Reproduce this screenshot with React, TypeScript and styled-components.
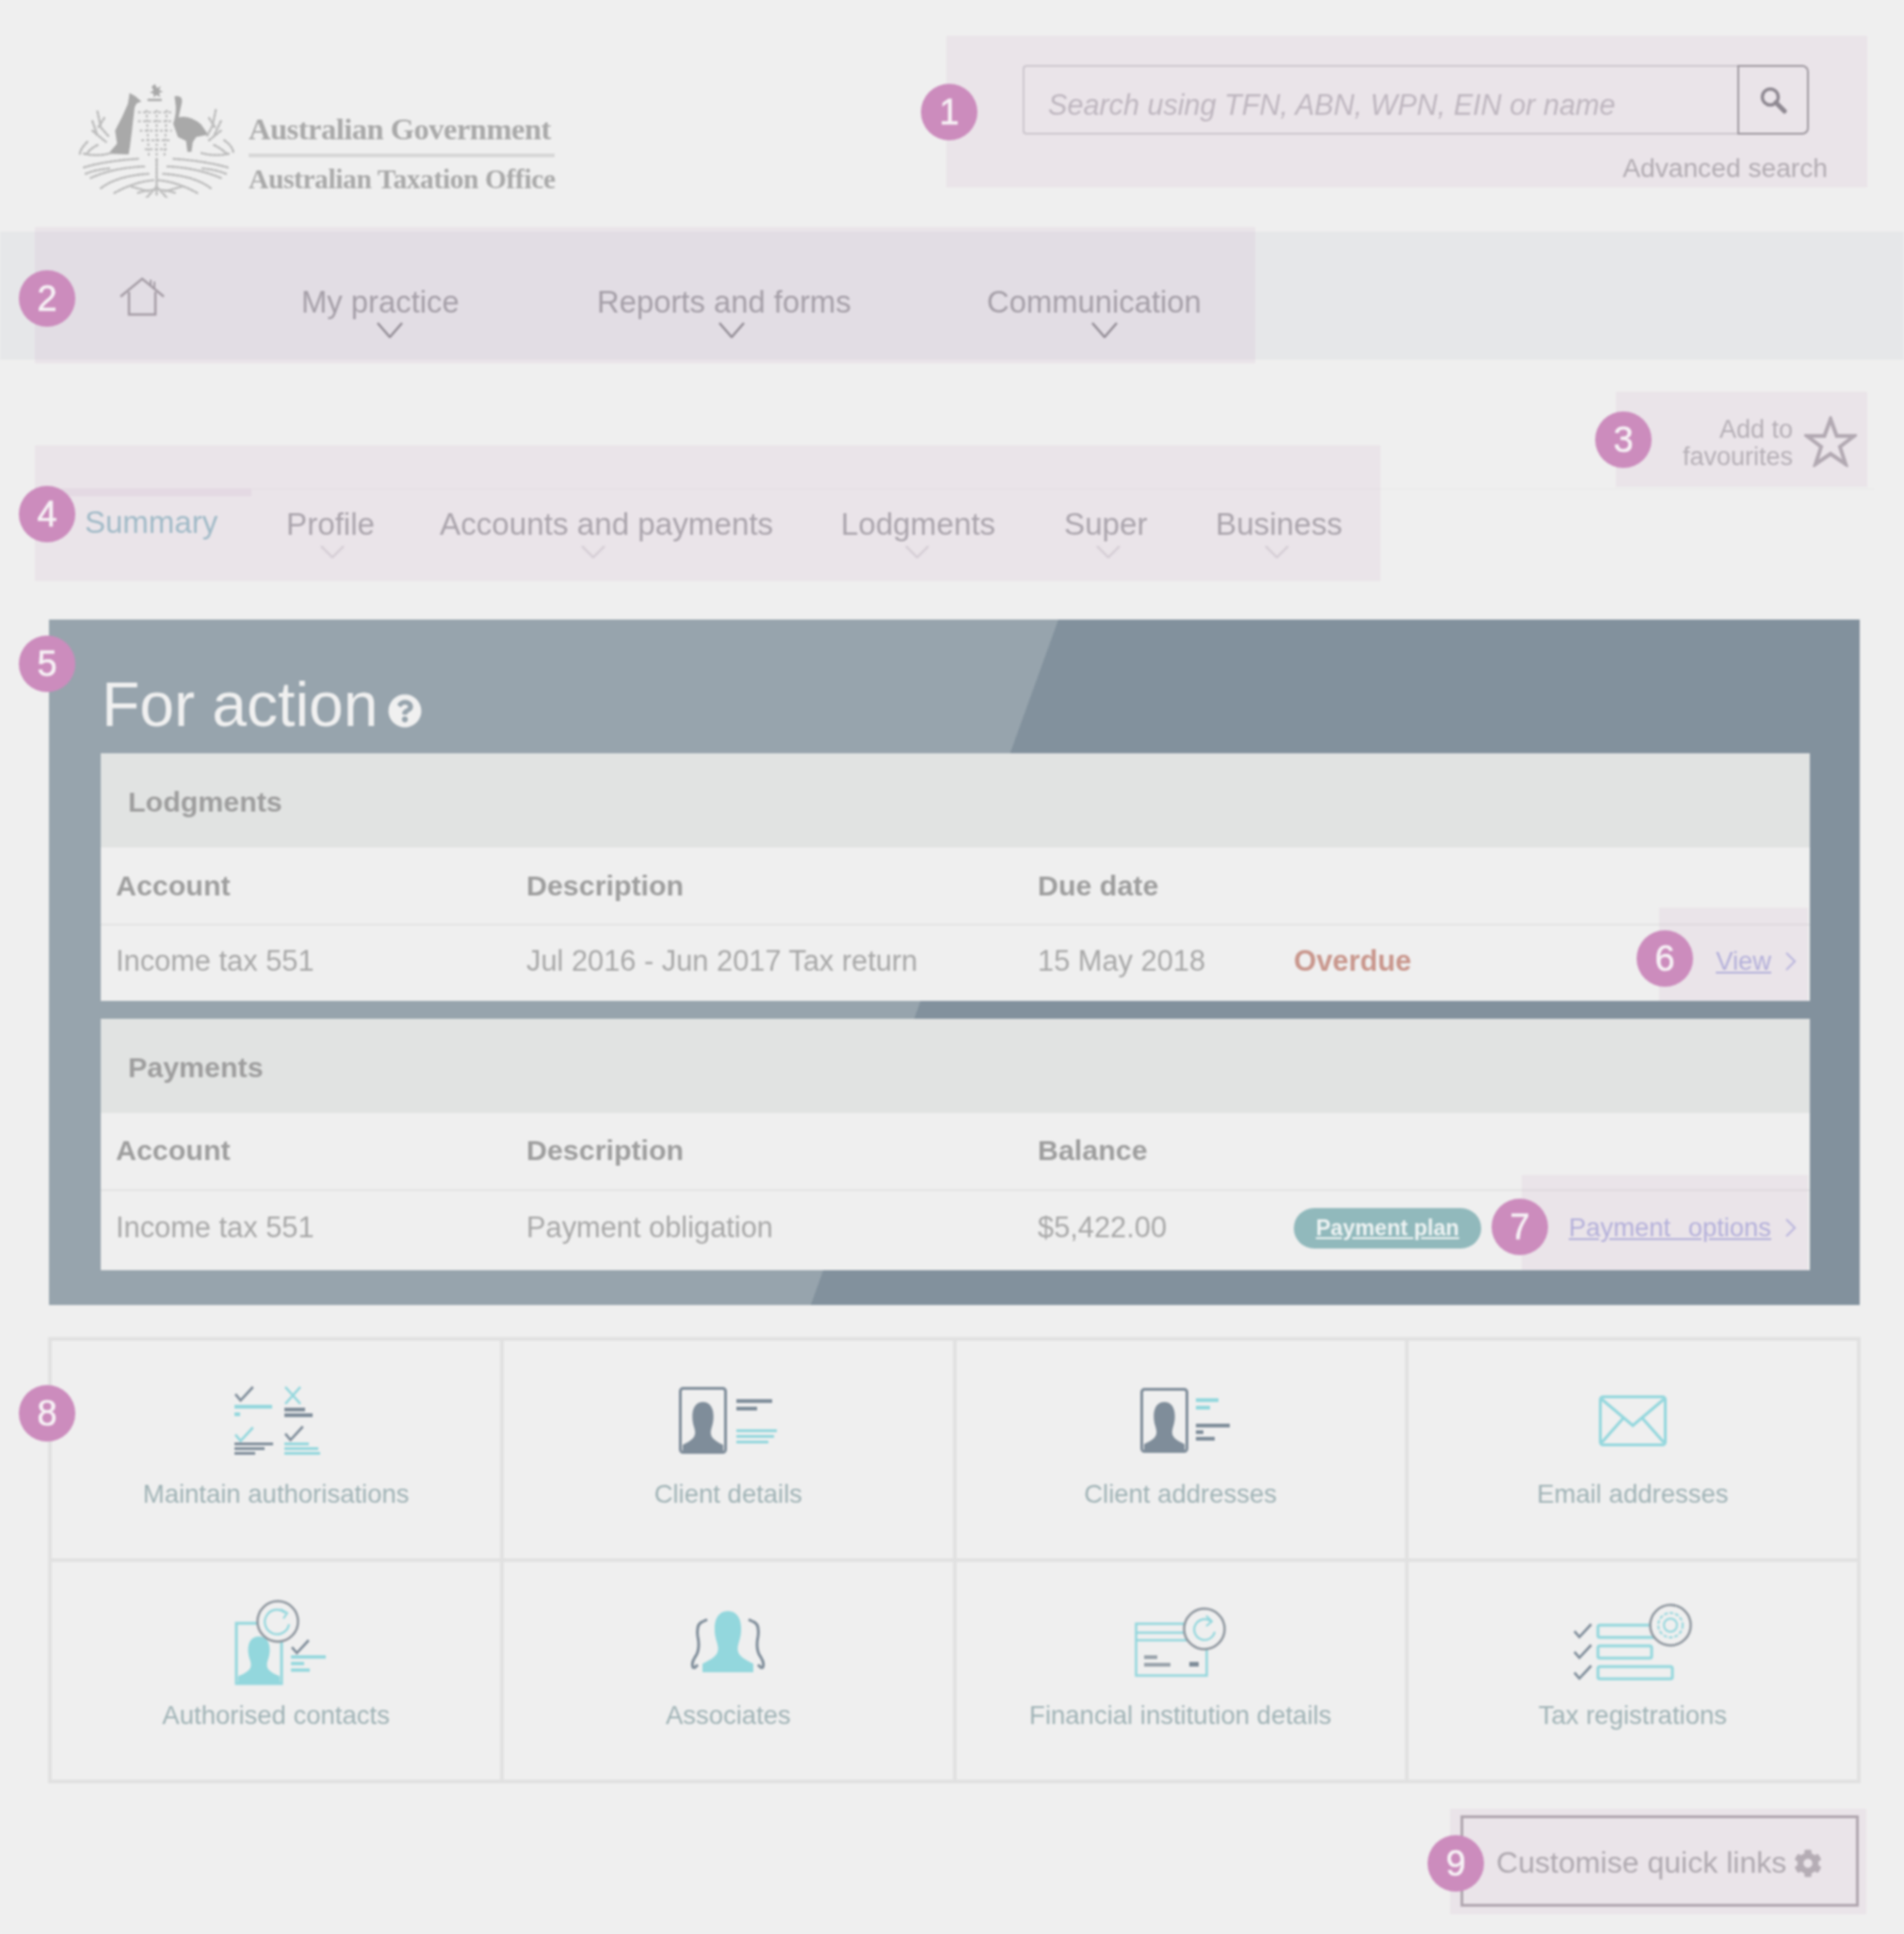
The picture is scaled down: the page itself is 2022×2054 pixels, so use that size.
import React from "react";
import styled, { createGlobalStyle } from "styled-components";
import { FaCog, FaQuestionCircle } from "react-icons/fa";

const GlobalStyle = createGlobalStyle`
  html, body { margin: 0; padding: 0; background: #efefef; }
  * { box-sizing: border-box; }
`;

const Page = styled.div`
  position: relative;
  width: 2022px;
  height: 2054px;
  overflow: hidden;
  background: #efefef;
  font-family: "Liberation Sans", Arial, sans-serif;
  color: #a3a3a5;
  filter: blur(1.05px);
`;

const Header = styled.header`
  height: 246px;
  display: flex;
  justify-content: space-between;
  padding: 0 101px 0 82px;
`;
const LogoBlock = styled.div`
  display: flex;
  align-items: flex-start;
  padding-top: 88px;
  gap: 14px;
`;
const LogoText = styled.div`
  display: flex;
  flex-direction: column;
  width: 325px;
  padding-top: 30px;
  font-family: "Liberation Serif", "Times New Roman", serif;
  font-weight: 700;
  color: #a9a9a9;
  white-space: nowrap;
`;
const LogoLine = styled.div`
  font-size: 32.5px;
  letter-spacing: -0.5px;
  line-height: 38px;
  height: 36px;
`;
const LogoRule = styled.div`
  height: 4px;
  background: #d7d7d7;
  margin: 9px 0 4px;
`;
const LogoSub = styled.div`
  font-size: 29.5px;
  letter-spacing: -0.4px;
  line-height: 38px;
`;
const SearchBlock = styled.div`
  width: 835px;
  padding-top: 69px;
`;
const SearchRow = styled.div`
  display: flex;
  height: 74px;
`;
const SearchField = styled.div`
  flex: 1;
  display: flex;
  align-items: center;
  padding: 10px 0 0 25px;
  border: 2px solid #cfcfd1;
  border-right: 0;
  border-radius: 4px 0 0 4px;
  font-size: 30.6px;
  font-style: italic;
  color: #bebcc0;
`;
const SearchButton = styled.div`
  width: 76px;
  display: flex;
  align-items: center;
  justify-content: center;
  border: 2px solid #9a9a9d;
  border-radius: 0 7px 7px 0;
`;
const AdvancedLink = styled.div`
  margin-top: 18px;
  margin-right: -20px;
  text-align: right;
  font-size: 28.2px;
  line-height: 34px;
  color: #b0b0b2;
`;

const Nav = styled.nav`
  height: 136px;
  background: #e6e7e9;
  display: flex;
  padding-left: 127px;
`;
const HomeLink = styled.div`
  width: 193px;
  padding-top: 48px;
`;
const NavItem = styled.div<{ $width: number }>`
  width: ${(p) => p.$width}px;
  padding-top: 54px;
  font-size: 32.8px;
  line-height: 42px;
  white-space: nowrap;
  color: #a2a2a6;
`;
const ChevronSlot = styled.div<{ $left: number; $top?: number }>`
  margin-left: ${(p) => p.$left}px;
  margin-top: ${(p) => p.$top ?? 0}px;
  line-height: 0;
`;

const FavRow = styled.div`
  height: 136px;
  display: flex;
  justify-content: flex-end;
  align-items: flex-start;
  padding: 60px 50px 0 0;
  gap: 12px;
`;
const FavText = styled.div`
  text-align: right;
  font-size: 27px;
  line-height: 29px;
  color: #b4b4b6;
`;

const Tabs = styled.div`
  height: 140px;
  margin: 0 32px 0 37px;
  border-top: 2px solid #ebebeb;
  display: flex;
`;
const TabActive = styled.div`
  width: 230px;
  margin-top: -1px;
  border-top: 8px solid #e8e3e8;
  padding: 7px 0 0 53px;
  font-size: 33px;
  line-height: 42px;
  color: #9dc0c9;
`;
const Tab = styled.div<{ $width: number }>`
  width: ${(p) => p.$width}px;
  padding-top: 16px;
  font-size: 33.2px;
  line-height: 42px;
  white-space: nowrap;
  color: #a8a8ab;
`;

const ActionPanel = styled.section`
  position: relative;
  height: 728px;
  margin: 0 47px 0 52px;
  padding: 142px 53px 0 55px;
  background: #82919d;
  overflow: hidden;
  &::before {
    content: "";
    position: absolute;
    inset: 0;
    background: #97a4ad;
    clip-path: polygon(0 0, 1072px 0, 809px 100%, 0 100%);
  }
`;
const ActionTitle = styled.h1`
  position: absolute;
  left: 56px;
  top: 47px;
  margin: 0;
  display: flex;
  align-items: center;
  gap: 11px;
  font-size: 66px;
  line-height: 86px;
  font-weight: 400;
  color: #f0f0f0;
`;
const HelpIcon = styled(FaQuestionCircle)`
  width: 36px;
  height: 36px;
  color: #f0f0f0;
  margin-top: 14px;
`;
const Card = styled.div<{ $height: number; $gap?: number }>`
  position: relative;
  height: ${(p) => p.$height}px;
  margin-bottom: ${(p) => p.$gap ?? 0}px;
  background: #efefef;
`;
const CardHead = styled.div`
  height: 100px;
  padding: 2px 29px 0;
  display: flex;
  align-items: center;
  background: #e1e3e2;
  font-size: 30.4px;
  font-weight: 700;
  color: #9e9e9e;
`;
const Row = styled.div<{ $height: number; $ruled?: boolean; $lift?: number }>`
  height: ${(p) => p.$height}px;
  display: grid;
  grid-template-columns: 436px 543px 272px 1fr;
  align-items: center;
  padding: 0 14px ${(p) => p.$lift ?? 0}px 16px;
  font-size: 30.8px;
  color: #a8a8a8;
  border-top: ${(p) => (p.$ruled ? "2px solid #e3e3e3" : "0")};
`;
const HeadCell = styled.div`
  font-size: 30.4px;
  font-weight: 700;
  color: #9e9e9e;
`;
const StatusCell = styled.div`
  display: flex;
  align-items: center;
  justify-content: space-between;
  white-space: nowrap;
`;
const Overdue = styled.span`
  font-weight: 700;
  color: #c9978d;
`;
const Pill = styled.span`
  width: 199px;
  height: 43px;
  border-radius: 22px;
  background: #91b9bc;
  color: #eef3f3;
  display: flex;
  align-items: center;
  justify-content: center;
  font-size: 23.4px;
  font-weight: 700;
  text-decoration: underline;
`;
const RowLink = styled.span`
  display: flex;
  align-items: center;
  gap: 14px;
  font-size: 27.4px;
  word-spacing: 11px;
  color: #b3b5de;
  text-decoration: underline;
`;

const QuickGrid = styled.div`
  width: 1925px;
  height: 474px;
  margin: 34px 0 0 51px;
  display: grid;
  grid-template-columns: repeat(4, 1fr);
  grid-template-rows: repeat(2, 1fr);
  gap: 4px;
  padding: 4px;
  background: #e1e1e1;
`;
const QuickCell = styled.div`
  background: #efefef;
  display: flex;
  flex-direction: column;
  align-items: center;
  padding-top: 30px;
`;
const IconArea = styled.div<{ $shift?: number }>`
  height: 110px;
  display: flex;
  align-items: center;
  justify-content: center;
  margin-left: ${(p) => p.$shift ?? 0}px;
`;
const QuickLabel = styled.div`
  margin-top: 7px;
  font-size: 27.5px;
  line-height: 32px;
  color: #a0b3b6;
  white-space: nowrap;
`;

const CustomiseRow = styled.div`
  display: flex;
  justify-content: flex-end;
  padding: 34px 48px 0 0;
`;
const CustomiseButton = styled.div`
  width: 423px;
  height: 97px;
  border: 3px solid #aeaaae;
  display: flex;
  align-items: center;
  padding: 4px 0 0 35px;
  gap: 8px;
  font-size: 32.1px;
  color: #adadaf;
  white-space: nowrap;
`;
const Gear = styled(FaCog)`
  width: 30px;
  height: 30px;
  color: #b4b1b5;
`;

const Highlight = styled.div<{ $x: number; $y: number; $w: number; $h: number }>`
  position: absolute;
  left: ${(p) => p.$x}px;
  top: ${(p) => p.$y}px;
  width: ${(p) => p.$w}px;
  height: ${(p) => p.$h}px;
  background: rgba(200, 140, 190, 0.1);
  pointer-events: none;
`;
const Badge = styled.div<{ $x: number; $y: number }>`
  position: absolute;
  left: ${(p) => p.$x - 30}px;
  top: ${(p) => p.$y - 30}px;
  width: 60px;
  height: 60px;
  border-radius: 50%;
  background: #cc8cbd;
  color: #f6f1f5;
  display: flex;
  align-items: center;
  justify-content: center;
  font-size: 38px;
  font-weight: 400;
  -webkit-text-stroke: 0.6px #f6f1f5;
`;

const DARK = "#7f8d9a";
const TEAL = "#93d7dd";

const Chevron = ({ w, h, color, sw }: { w: number; h: number; color: string; sw: number }) => (
  <svg width={w} height={h} viewBox={`0 0 ${w} ${h}`} fill="none">
    <path d={`M1 1 L${w / 2} ${h - 1} L${w - 1} 1`} stroke={color} strokeWidth={sw} />
  </svg>
);
const NavChevron = () => <Chevron w={28} h={17} color="#8f8f93" sw={2.5} />;
const TabChevron = () => <Chevron w={26} h={14} color="#d9d7da" sw={2.5} />;
const LinkChevron = () => (
  <svg width="13" height="22" viewBox="0 0 13 22" fill="none">
    <path d="M2 2 L11 11 L2 20" stroke="#bbbde2" strokeWidth="2.2" />
  </svg>
);

const Arms = () => (
  <svg width="168" height="122" viewBox="0 0 468 360" preserveAspectRatio="none" fill="none">
    <g fill="#a9a9a9">
      <path d="M155 32 L172 42 L190 58 L176 64 L170 76 L166 112 L162 150 L156 200 L152 224 L92 222 L118 190 L112 150 L134 104 L150 66 Z" />
      <path d="M288 42 Q312 38 310 60 L300 108 Q332 100 366 130 L388 162 L352 170 L342 186 L338 216 L326 216 L322 182 L298 170 L284 128 Q296 90 290 60 Z" />
      <path d="M230 4 L236 16 L248 10 L242 22 L254 28 L242 32 L246 44 L234 38 L226 46 L226 34 L214 30 L226 24 L220 12 Z" />
      <rect x="208" y="50" width="42" height="7" />
    </g>
    <g stroke="#b9b9b9" strokeWidth="6" strokeDasharray="8 7">
      <path d="M180 92 H285 M180 120 H285 M185 150 H280 M190 180 H275 M200 208 H265" />
      <path d="M205 85 L212 230 M235 85 V250 M265 85 L258 230" />
    </g>
    <g stroke="#bdbdbd" strokeWidth="7" strokeDasharray="7 6" strokeLinecap="round">
      <path d="M60 90 L70 140 L95 170 M45 120 L60 165 M80 110 L62 140 M45 150 L85 185 M30 185 Q10 205 8 222 M60 195 Q40 205 30 220 M20 222 Q60 232 100 220" />
      <path d="M410 85 L400 135 L385 165 M425 120 L405 165 M390 110 L408 140 M425 150 L390 180 M435 180 Q462 200 462 222 M405 195 Q425 205 440 220 M448 222 Q410 232 368 220" />
      <path d="M20 265 Q80 245 180 238 M25 285 Q60 270 100 268 M40 298 Q110 265 200 262 M70 330 Q120 290 215 285 M110 345 Q170 310 225 305" />
      <path d="M445 265 Q380 245 285 238 M440 285 Q405 270 365 268 M425 298 Q350 265 265 262 M395 330 Q345 290 250 285 M355 345 Q295 310 240 305" />
      <path d="M235 240 V350 M180 345 Q235 325 290 345 M205 360 L235 325 L265 360 M160 325 L210 340 M310 325 L260 340" />
    </g>
  </svg>
);

const HomeIcon = () => (
  <svg width="48" height="42" viewBox="0 0 48 42" fill="none" stroke="#a2a0a4" strokeWidth="2.5">
    <path d="M1 21 L24 2 L47 21" />
    <path d="M33 9 V3 M37 12 V5" strokeWidth="2" />
    <path d="M10 16 V40 H38 V16" />
  </svg>
);

const SearchGlyph = () => (
  <svg width="30" height="30" viewBox="0 0 30 30" fill="none" stroke="#8a8a8e">
    <circle cx="12" cy="12" r="8.5" strokeWidth="3.5" />
    <path d="M18 18 L27 27" strokeWidth="5" strokeLinecap="round" />
  </svg>
);

const StarIcon = () => (
  <svg width="56" height="54" viewBox="0 0 56 54" fill="none">
    <path d="M28 3 L34.5 21 L53 21 L38 32.5 L44 51 L28 40 L12 51 L18 32.5 L3 21 L21.5 21 Z" stroke="#b0adb1" strokeWidth="4" />
  </svg>
);

const Check = ({ x, y, color = DARK, s = 1 }: { x: number; y: number; color?: string; s?: number }) => (
  <path d={`M${x} ${y + 7 * s} L${x + 5 * s} ${y + 13 * s} L${x + 17 * s} ${y}`} stroke={color} strokeWidth={2.6} fill="none" />
);

const Bars = ({ x, y, widths, color, h = 3, step = 5 }: { x: number; y: number; widths: number[]; color: string; h?: number; step?: number }) => (
  <g fill={color}>
    {widths.map((w, i) => (
      <rect key={i} x={x} y={y + i * step} width={w} height={h} />
    ))}
  </g>
);

const Person = ({ x, y, w, h, color }: { x: number; y: number; w: number; h: number; color: string }) => (
  <path
    d={`M${x + w * 0.5} ${y} C${x + w * 0.78} ${y} ${x + w * 0.8} ${y + h * 0.3} ${x + w * 0.72} ${y + h * 0.5} C${x + w * 0.66} ${y + h * 0.66} ${x + w * 0.68} ${y + h * 0.74} ${x + w} ${y + h * 0.86} L${x + w} ${y + h} L${x} ${y + h} L${x} ${y + h * 0.86} C${x + w * 0.32} ${y + h * 0.74} ${x + w * 0.34} ${y + h * 0.66} ${x + w * 0.28} ${y + h * 0.5} C${x + w * 0.2} ${y + h * 0.3} ${x + w * 0.22} ${y} ${x + w * 0.5} ${y} Z`}
    fill={color}
  />
);

const MaintainIcon = () => (
  <svg width="92" height="76" viewBox="0 0 92 76">
    <Check x={1} y={2} s={1.1} />
    <Bars x={0} y={21} widths={[40, 6]} color={TEAL} h={4} step={8} />
    <path d="M54 2 L70 20 M70 2 L54 20" stroke={TEAL} strokeWidth="2.6" />
    <Bars x={53} y={24} widths={[22, 30]} color={DARK} h={4} step={6} />
    <Check x={1} y={45} color={TEAL} s={1.1} />
    <Bars x={0} y={61} widths={[41, 32, 22]} color={DARK} h={3} step={5} />
    <Check x={54} y={44} s={1.1} />
    <Bars x={53} y={61} widths={[26, 36, 38]} color={TEAL} h={3} step={5} />
  </svg>
);

const ClientDetailsIcon = () => (
  <svg width="104" height="72" viewBox="0 0 104 72">
    <rect x="1.5" y="1.5" width="48" height="68" rx="3" fill="none" stroke={DARK} strokeWidth="3" />
    <Person x={4} y={16} w={43} h={53} color={DARK} />
    <Bars x={61} y={13} widths={[38, 22]} color={DARK} h={4} step={8} />
    <Bars x={61} y={45} widths={[44, 40, 34]} color={TEAL} h={3} step={6} />
  </svg>
);

const ClientAddressesIcon = () => (
  <svg width="96" height="70" viewBox="0 0 96 70">
    <rect x="1.5" y="1.5" width="48" height="66" rx="3" fill="none" stroke={DARK} strokeWidth="3" />
    <Person x={4} y={15} w={43} h={52} color={DARK} />
    <Bars x={59} y={11} widths={[24, 15]} color={TEAL} h={4} step={8} />
    <Bars x={59} y={38} widths={[36, 8, 20]} color={DARK} h={4} step={7} />
  </svg>
);

const EmailIcon = () => (
  <svg width="72" height="54" viewBox="0 0 72 54" fill="none" stroke={TEAL} strokeWidth="3">
    <rect x="1.5" y="1.5" width="69" height="51" rx="3" />
    <path d="M3 4 L36 32 L69 4 M3 50 L26 24 M69 50 L46 24" />
  </svg>
);

const ContactsIcon = () => (
  <svg width="98" height="92" viewBox="0 0 98 92">
    <rect x="2" y="26" width="48" height="64" fill="none" stroke={TEAL} strokeWidth="3" />
    <Person x={4} y={40} w={44} h={49} color={TEAL} />
    <circle cx="46" cy="24" r="21.5" fill="#efefef" stroke="#8f979f" strokeWidth="2.5" />
    <path d="M54 15 A13 13 0 1 0 58 27" fill="none" stroke={TEAL} strokeWidth="2.2" />
    <path d="M49 11 L56 15 L52 21" fill="none" stroke={TEAL} strokeWidth="2" />
    <Check x={61} y={44} s={1.05} />
    <Bars x={60} y={60} widths={[37, 14, 20]} color={TEAL} h={3.5} step={7} />
  </svg>
);

const AssociatesIcon = () => (
  <svg width="80" height="68" viewBox="0 0 80 68" fill="none">
    <path d="M14 12 Q6 14 8 28 Q11 42 5 50 Q0 58 4 62 M66 12 Q74 14 72 28 Q69 42 75 50 Q80 58 76 62" stroke={DARK} strokeWidth="3" />
    <path d="M14 12 L18 10 M66 12 L62 10 M4 62 L8 58 M76 62 L72 58" stroke={DARK} strokeWidth="3" />
    <Person x={13} y={1} w={54} h={65} color={TEAL} />
  </svg>
);

const FinancialIcon = () => (
  <svg width="98" height="74" viewBox="0 0 98 74" fill="none">
    <rect x="1.5" y="17.5" width="75" height="55" stroke={TEAL} strokeWidth="2.5" />
    <path d="M2 27 H76 M2 35 H76" stroke={TEAL} strokeWidth="2.5" />
    <Bars x={10} y={51} widths={[14, 28]} color="#9aa3ab" h={4} step={8} />
    <rect x="58" y="58" width="10" height="5" fill={DARK} />
    <circle cx="74" cy="23" r="21.5" fill="#efefef" stroke="#8f979f" strokeWidth="2.5" />
    <path d="M81 15 A11 11 0 1 0 85 26" stroke={TEAL} strokeWidth="2.2" />
    <path d="M76 9 L82 15 L76 20" stroke={TEAL} strokeWidth="2" />
  </svg>
);

const TaxIcon = () => (
  <svg width="126" height="82" viewBox="0 0 126 82" fill="none">
    <Check x={1} y={22} s={1.05} />
    <Check x={1} y={44} s={1.05} />
    <Check x={1} y={66} s={1.05} />
    <rect x="26" y="23" width="62" height="13" rx="2" stroke={TEAL} strokeWidth="3" />
    <rect x="26" y="45" width="57" height="13" rx="2" stroke={TEAL} strokeWidth="3" />
    <rect x="26" y="67" width="79" height="13" rx="2" stroke={TEAL} strokeWidth="3" />
    <circle cx="103" cy="23" r="21.5" fill="#efefef" stroke="#8f979f" strokeWidth="2.5" />
    <circle cx="103" cy="23" r="13" stroke={TEAL} strokeWidth="2" strokeDasharray="4 2" />
    <circle cx="103" cy="23" r="7" stroke={TEAL} strokeWidth="2" />
  </svg>
);

const quickLinks: { label: string; icon: React.ReactNode; shift?: number }[] = [
  { label: "Maintain authorisations", icon: <MaintainIcon />, shift: 4 },
  { label: "Client details", icon: <ClientDetailsIcon /> },
  { label: "Client addresses", icon: <ClientAddressesIcon />, shift: 10 },
  { label: "Email addresses", icon: <EmailIcon /> },
  { label: "Authorised contacts", icon: <ContactsIcon />, shift: 9 },
  { label: "Associates", icon: <AssociatesIcon /> },
  { label: "Financial institution details", icon: <FinancialIcon /> },
  { label: "Tax registrations", icon: <TaxIcon /> },
];

const navItems = [
  { label: "My practice", width: 314, left: 80 },
  { label: "Reports and forms", width: 414, left: 129 },
  { label: "Communication", width: 232, left: 111 },
];
const tabs = [
  { label: "Profile", width: 163, left: 36 },
  { label: "Accounts and payments", width: 426, left: 150 },
  { label: "Lodgments", width: 237, left: 68 },
  { label: "Super", width: 161, left: 34 },
  { label: "Business", width: 150, left: 52 },
];
const highlights = [
  { x: 1005, y: 38, w: 978, h: 161 },
  { x: 37, y: 241, w: 1296, h: 145 },
  { x: 1716, y: 416, w: 267, h: 101 },
  { x: 37, y: 473, w: 1429, h: 144 },
  { x: 1762, y: 964, w: 158, h: 99 },
  { x: 1616, y: 1248, w: 304, h: 101 },
  { x: 1540, y: 1921, w: 442, h: 112 },
];
const badges = [
  { n: 1, x: 1008, y: 119 },
  { n: 2, x: 50, y: 317 },
  { n: 3, x: 1724, y: 467 },
  { n: 4, x: 50, y: 546 },
  { n: 5, x: 50, y: 705 },
  { n: 6, x: 1768, y: 1018 },
  { n: 7, x: 1614, y: 1303 },
  { n: 8, x: 50, y: 1501 },
  { n: 9, x: 1546, y: 1979 },
];

export default function App() {
  return (
    <>
      <GlobalStyle />
      <Page>
        <Header>
          <LogoBlock>
            <Arms />
            <LogoText>
              <LogoLine>Australian Government</LogoLine>
              <LogoRule />
              <LogoSub>Australian Taxation Office</LogoSub>
            </LogoText>
          </LogoBlock>
          <SearchBlock>
            <SearchRow>
              <SearchField>Search using TFN, ABN, WPN, EIN or name</SearchField>
              <SearchButton>
                <SearchGlyph />
              </SearchButton>
            </SearchRow>
            <AdvancedLink>Advanced search</AdvancedLink>
          </SearchBlock>
        </Header>

        <Nav>
          <HomeLink>
            <HomeIcon />
          </HomeLink>
          {navItems.map((item) => (
            <NavItem key={item.label} $width={item.width}>
              {item.label}
              <ChevronSlot $left={item.left}>
                <NavChevron />
              </ChevronSlot>
            </NavItem>
          ))}
        </Nav>

        <FavRow>
          <FavText>
            Add to
            <br />
            favourites
          </FavText>
          <StarIcon />
        </FavRow>

        <Tabs>
          <TabActive>Summary</TabActive>
          <Tab $width={37} />
          {tabs.map((tab) => (
            <Tab key={tab.label} $width={tab.width}>
              {tab.label}
              <ChevronSlot $left={tab.left} $top={1}>
                <TabChevron />
              </ChevronSlot>
            </Tab>
          ))}
        </Tabs>

        <ActionPanel>
          <ActionTitle>
            For action
            <HelpIcon />
          </ActionTitle>
          <Card $height={263} $gap={19}>
            <CardHead>Lodgments</CardHead>
            <Row $height={81}>
              <HeadCell>Account</HeadCell>
              <HeadCell>Description</HeadCell>
              <HeadCell>Due date</HeadCell>
            </Row>
            <Row $height={82} $ruled $lift={5}>
              <span>Income tax 551</span>
              <span>Jul 2016 - Jun 2017 Tax return</span>
              <span>15 May 2018</span>
              <StatusCell>
                <Overdue>Overdue</Overdue>
                <RowLink>
                  View <LinkChevron />
                </RowLink>
              </StatusCell>
            </Row>
          </Card>
          <Card $height={267}>
            <CardHead>Payments</CardHead>
            <Row $height={81} $lift={2}>
              <HeadCell>Account</HeadCell>
              <HeadCell>Description</HeadCell>
              <HeadCell>Balance</HeadCell>
            </Row>
            <Row $height={86} $ruled $lift={6}>
              <span>Income tax 551</span>
              <span>Payment obligation</span>
              <span>$5,422.00</span>
              <StatusCell>
                <Pill>Payment plan</Pill>
                <RowLink>
                  Payment options <LinkChevron />
                </RowLink>
              </StatusCell>
            </Row>
          </Card>
        </ActionPanel>

        <QuickGrid>
          {quickLinks.map((link) => (
            <QuickCell key={link.label}>
              <IconArea $shift={link.shift}>{link.icon}</IconArea>
              <QuickLabel>{link.label}</QuickLabel>
            </QuickCell>
          ))}
        </QuickGrid>

        <CustomiseRow>
          <CustomiseButton>
            Customise quick links
            <Gear />
          </CustomiseButton>
        </CustomiseRow>

        {highlights.map((h) => (
          <Highlight key={`${h.x}-${h.y}`} $x={h.x} $y={h.y} $w={h.w} $h={h.h} />
        ))}
        {badges.map((b) => (
          <Badge key={b.n} $x={b.x} $y={b.y}>
            {b.n}
          </Badge>
        ))}
      </Page>
    </>
  );
}
